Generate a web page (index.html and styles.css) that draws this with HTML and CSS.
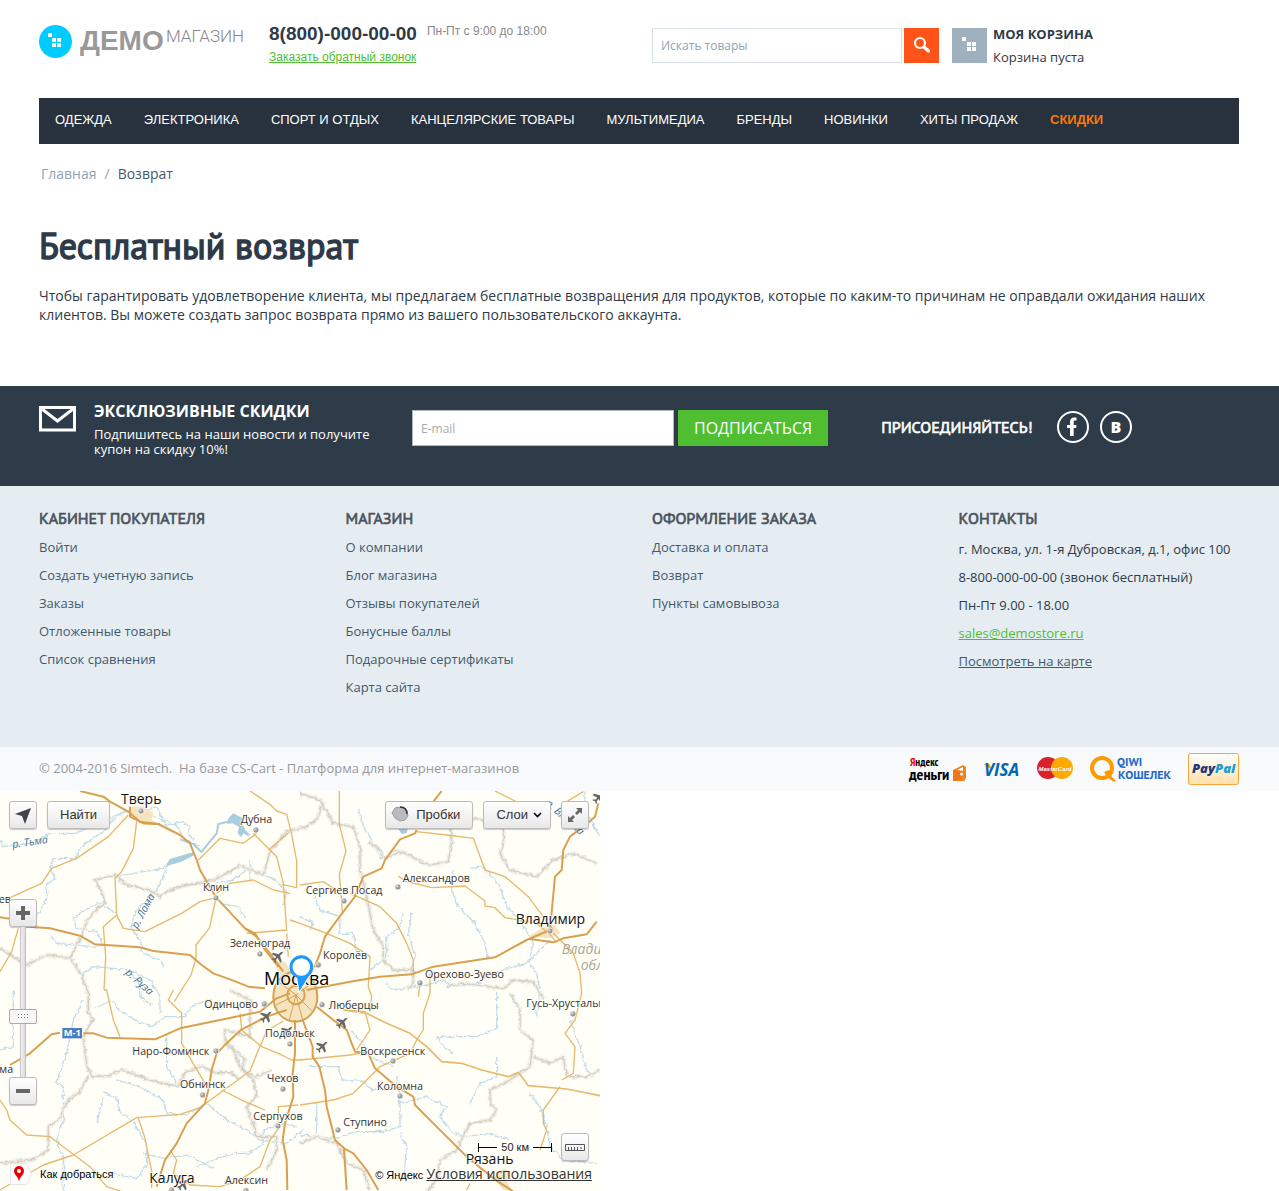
FILE: index.html
```html
<!DOCTYPE html>
<html lang="ru">

<head>
    <meta charset="UTF-8">
    <meta name="viewport" content="width=device-width, initial-scale=1.0">
    <title>Бесплатный возврат</title>
    <link rel="stylesheet" href="styles.css">
</head>

<body>
    <header class="container header">
        <a class="logo" href="#" aria-label="Демо магазин">
            <svg width="210" height="36" viewBox="0 0 210 36">
                <circle cx="16.500" cy="18.500" r="16.500" fill="#0cf"/>
                <path fill="#fff" d="M9 10h4v4H9zM13 15h4v4h-4zM18 15h4v4h-4zM13 20h4v4h-4zM18 20h4v4h-4z"/>
                <text class="logo-bold" x="41" y="27">ДЕМО</text>
                <text class="logo-light" x="127" y="19">МАГАЗИН</text>
            </svg>
        </a>
        <div class="phone">
            <div>
                <div class="phone-number">8(800)-000-00-00</div>
                <a class="callback" href="#">Заказать обратный звонок</a>
            </div>
            <div class="phone-hours">Пн-Пт с 9:00 до 18:00</div>
        </div>
        <div class="header-right">
            <form class="search">
                <input type="text" class="search-input" placeholder="Искать товары" aria-label="Искать товары">
                <button type="button" class="search-btn" aria-label="Найти">
                    <svg width="35" height="35" viewBox="0 0 35 35" fill="none" stroke="#fff">
                        <circle cx="16" cy="15" r="5" stroke-width="2.200"/>
                        <path d="M20 19l4.500 4" stroke-width="3.200" stroke-linecap="round"/>
                    </svg>
                </button>
            </form>
            <a class="cart" href="#">
                <svg width="35" height="35" viewBox="0 0 35 35">
                    <rect width="35" height="35" fill="#9fb1bf"/>
                    <path fill="#fff" d="M10 9h4v4h-4zM15 14h4v4h-4zM20 14h4v4h-4zM15 19h4v4h-4zM20 19h4v4h-4z"/>
                </svg>
                <span>
                    <b class="cart-title">МОЯ КОРЗИНА</b>
                    <span class="cart-text">Корзина пуста</span>
                </span>
            </a>
        </div>
    </header>

    <nav class="container">
        <ul class="menu">
            <li><a href="#">ОДЕЖДА</a></li>
            <li><a href="#">ЭЛЕКТРОНИКА</a></li>
            <li><a href="#">СПОРТ И ОТДЫХ</a></li>
            <li><a href="#">КАНЦЕЛЯРСКИЕ ТОВАРЫ</a></li>
            <li><a href="#">МУЛЬТИМЕДИА</a></li>
            <li><a href="#">БРЕНДЫ</a></li>
            <li><a href="#">НОВИНКИ</a></li>
            <li><a href="#">ХИТЫ ПРОДАЖ</a></li>
            <li><a class="sale" href="#">СКИДКИ</a></li>
        </ul>
    </nav>

    <main class="container content">
        <div class="breadcrumbs">
            <a href="#">Главная</a><span class="slash">/</span><span>Возврат</span>
        </div>
        <h1>Бесплатный возврат</h1>
        <p>Чтобы гарантировать удовлетворение клиента, мы предлагаем бесплатные возвращения для продуктов, которые по каким-то причинам не оправдали ожидания наших клиентов. Вы можете создать запрос возврата прямо из вашего пользовательского аккаунта.</p>
    </main>

    <section class="newsletter">
        <div class="container newsletter-row">
            <div class="promo">
                <svg class="promo-icon" width="37" height="26" viewBox="0 0 37 26" fill="none" stroke="#fff" stroke-width="3">
                    <path d="M1.500 1.500h34v22.500h-34z"/>
                    <path d="M3 3l15.500 12L34 3"/>
                </svg>
                <div>
                    <h2>ЭКСКЛЮЗИВНЫЕ СКИДКИ</h2>
                    <p>Подпишитесь на наши новости и получите купон на скидку 10%!</p>
                </div>
            </div>
            <form class="subscribe">
                <input type="email" class="subscribe-input" placeholder="E-mail" aria-label="E-mail">
                <button type="button" class="subscribe-btn">ПОДПИСАТЬСЯ</button>
            </form>
            <div class="social">
                <span class="social-title">ПРИСОЕДИНЯЙТЕСЬ!</span>
                <a href="#" aria-label="Facebook">
                    <svg width="32" height="32" viewBox="0 0 32 32">
                        <circle cx="16" cy="16" r="15" fill="none" stroke="#fff" stroke-width="2"/>
                        <path fill="#fff" d="M13 25v-8h-3v-3h3v-3c0-3 1.500-4.500 4-4.500h2.500v3H18c-1 0-1.300.5-1.300 1.500v3h2.800l-.4 3h-2.400v8z"/>
                    </svg>
                </a>
                <a href="#" aria-label="ВКонтакте">
                    <svg width="32" height="32" viewBox="0 0 32 32">
                        <circle cx="16" cy="16" r="15" fill="none" stroke="#fff" stroke-width="2"/>
                        <text class="vk" x="16" y="22">B</text>
                    </svg>
                </a>
            </div>
        </div>
    </section>

    <footer>
        <div class="footer-links">
            <div class="container footer-grid">
                <div>
                    <h3>КАБИНЕТ ПОКУПАТЕЛЯ</h3>
                    <ul>
                        <li><a href="#">Войти</a></li>
                        <li><a href="#">Создать учетную запись</a></li>
                        <li><a href="#">Заказы</a></li>
                        <li><a href="#">Отложенные товары</a></li>
                        <li><a href="#">Список сравнения</a></li>
                    </ul>
                </div>
                <div>
                    <h3>МАГАЗИН</h3>
                    <ul>
                        <li><a href="#">О компании</a></li>
                        <li><a href="#">Блог магазина</a></li>
                        <li><a href="#">Отзывы покупателей</a></li>
                        <li><a href="#">Бонусные баллы</a></li>
                        <li><a href="#">Подарочные сертификаты</a></li>
                        <li><a href="#">Карта сайта</a></li>
                    </ul>
                </div>
                <div>
                    <h3>ОФОРМЛЕНИЕ ЗАКАЗА</h3>
                    <ul>
                        <li><a href="#">Доставка и оплата</a></li>
                        <li><a href="#">Возврат</a></li>
                        <li><a href="#">Пункты самовывоза</a></li>
                    </ul>
                </div>
                <div>
                    <h3>КОНТАКТЫ</h3>
                    <ul class="contacts">
                        <li>г. Москва, ул. 1-я Дубровская, д.1, офис 100</li>
                        <li>8-800-000-00-00 (звонок бесплатный)</li>
                        <li>Пн-Пт 9.00 - 18.00</li>
                        <li><a class="mail" href="#">sales@demostore.ru</a></li>
                        <li><a class="on-map" href="#">Посмотреть на карте</a></li>
                    </ul>
                </div>
            </div>
        </div>
        <div class="copyright">
            <div class="container copyright-row">
                <p>© 2004-2016 Simtech. &nbsp;На базе CS-Cart - Платформа для интернет-магазинов</p>
                <svg class="payments" width="332" height="34" viewBox="0 0 332 34">
                    <defs>
                        <linearGradient id="pp" x1="0" y1="0" x2="0" y2="1">
                            <stop offset="0" stop-color="#fff"/>
                            <stop offset="1" stop-color="#ffe0a8"/>
                        </linearGradient>
                    </defs>
                    <text class="ya-small" x="3" y="14"><tspan fill="#e00">Я</tspan>ндекс</text>
                    <text class="ya-big" x="2" y="28">деньги</text>
                    <path fill="#f58220" d="M46 18l10-5 3 2v11l-2 3H46z"/>
                    <path fill="#d9640f" d="M46 18h9v9l-9 2z" opacity=".35"/>
                    <path fill="#fff" d="M50 18l6-3v4zM53 22a1.500 1.500 0 1 0 3 0 1.500 1.500 0 1 0-3 0z"/>
                    <path fill="#f90" d="M76 12h6l3 5-1 2c-1-3-4-6-8-7z"/>
                    <text class="visa" x="77" y="24">VISA</text>
                    <circle cx="141" cy="16" r="11" fill="#d9222a"/>
                    <circle cx="155" cy="16" r="11" fill="#fa0"/>
                    <text class="mc" x="148" y="19">MasterCard</text>
                    <circle cx="195" cy="16" r="10" fill="none" stroke="#f90" stroke-width="4"/>
                    <path d="M197 20l5-2 3 7 4 4-2 1-6-4z" fill="#f90"/>
                    <text class="qiwi" x="210" y="14">QIWI</text>
                    <text class="qiwi" x="211" y="27">КОШЕЛЕК</text>
                    <rect x="281.500" y="1.500" width="50" height="31" rx="2" fill="url(#pp)" stroke="#f9a63a"/>
                    <text class="paypal" x="285" y="21"><tspan fill="#1f3a79">Pay</tspan><tspan fill="#1a9bd7">Pal</tspan></text>
                </svg>
            </div>
        </div>
    </footer>

    <div class="map">
        <svg class="map-canvas" viewBox="0 3 1800 1200" preserveAspectRatio="xMinYMin slice">
            <defs>
                <g id="town">
                    <circle r="9" fill="#999" stroke="#fff" stroke-width="2"/>
                    <circle cx="-2" cy="-2" r="4" fill="#ccc"/>
                </g>
                <path id="plane" fill="#666" d="M15-16l-8 2-6 6-17-5-4 4 14 8-6 6-6-1-3 3 8 3 3 8 3-3-1-6 6-6 8 14 4-4-5-17 6-6z"/>
                <!-- makes rivers and borders wind -->
                <filter id="wind" filterUnits="userSpaceOnUse" x="0" y="0" width="1800" height="1210" color-interpolation-filters="sRGB">
                    <feTurbulence type="fractalNoise" baseFrequency="0.08" numOctaves="2" seed="4"/>
                    <feDisplacementMap in="SourceGraphic" scale="13" xChannelSelector="R" yChannelSelector="G"/>
                </filter>
                <g id="border-lines">
                    <path d="M0 475l40 25 40 25 60-30 70 10 30-60 25-60 50-50-10-30-20-35 60-15 35 30 70 15 30 20 10-10 50-20 100-20 50-25 30-20 70 30 20-70 50-60 60-15 30-20 20-55"/>
                    <path d="M215 508l30 50 20 50 0 60 15 20-30 50 10 90 15 30 50 0 40-20 50 20 60 20 60 10 20-40 50-20 40 20 50 0 20 20"/>
                    <path d="M265 860l-30 50-30 20-30 60-30 20 0 70-50 30-95 10M670 760l30 20 20 50 40 40 10 50 -30 30 20 50 10 40 60 0 0 40-30 60"/>
                    <path d="M690 600l60 30 0 110-75-20 0 30 60 60-10 30 40 20 50-20"/>
                    <path d="M900 10l60 20 40 70 60 10 20 60 0 70 20 80 20 100 30 50 0 40 30 30 60 0 0 40-20 20"/>
                    <path d="M1105 155l30 20 20 30 50-20 40 20 40 20 60-10 10-60 -5-50 80-20 60 20M1510 100l0 60-10 30 30 50 80 20 50-50 60-20 70 30"/>
                    <path d="M1340 590l50-10 120 15 30-25 60 5 30 50M1530 610l30 50 0 60 40 30 -10 80-60 40-60 30 0 40 20 20-20 30-60 10-40 80-50 30-10 60-50 60"/>
                    <path d="M1600 800l50 20 40-20 10 60 60 0 40-20M900 1060l50-20 60 20 30 60 50 20 20 60"/>
                </g>
            </defs>

            <!-- rivers -->
            <g class="rivers" filter="url(#wind)">
                <path d="M0 150l10 20 80-10 60-30 80 0 60-40 50-10 40 -20 40 10 60 15 20 20 50-10 20 15 -5 20 15 20"/>
                <path d="M385 60l-50 30-20 30-70 50-20 35-65 0-10 30 15 30-25 20 0 40-15 30-25 30 10 30"/>
                <path d="M440 60l30-10 20 40 40 15 20 40 50 25"/>
                <path d="M350 260l80-15 60-10 30-25 60-20M500 240l-30 60-60 60-20 50 30 40 10 40 50 20 10 20"/>
                <path d="M350 370l-50-30-30 10-50 35 10 30 60 10 20 40-30 5-110-10-15-20"/>
                <path d="M740 240l-40 30-50 10M740 240l80 25 40 40-10 40M750 210l0 60M660 340l55 10 20 35"/>
                <path d="M250 550l30-20 110 10 60 30 30 50 0 50M385 545l30 30 10 50 30 20M285 655l50-25 20 30 70 40 30 10 40-30 60 0 20-30 60-25"/>
                <path d="M250 630l-30 60-20 100-30 90 20 10 0 100-20 60 20 50 0 100 60 60M0 780l40-10 0-170"/>
                <path d="M310 905l40 20 10 40 40 30 40 70 0 60-30 40-80-15M430 1090l60 15 70-10 80 40M290 1000l20-80"/>
                <path d="M350 870l70 20 70 40 10 40 60 5 60-35 60 50 60 30 40 30 80 10 50-40M500 730l0 100 30 50"/>
                <path d="M590 1130l50-20 60-20 50 0 40-30 0-40 60-20 40 10"/>
                <path d="M1150 210l30-30 40 10M1160 580l20 20 100-15 50-15 30 20 70-10 50-30 60-20 40 -10 40-40 30-30"/>
                <path d="M1210 370l-10 40-40 30 0 60-50 40M1235 370l-10 60 20 70-15 50M1075 60l20 60 40 60 10 30"/>
                <path d="M1360 240l-5 60 20 50 50 50 30 60 10 50M1410 235l40-5 50 60 20 60 40 40 40 70-10 40M1590 520l20 30 10 50"/>
                <path d="M940 310l20 50 60 20 0 50 40 0 10 60M900 380l40 20-10 20M1725 80l30-30 0-50M1755 60l45 80"/>
                <path d="M925 830l90 0 10 40 60 0 30 30 80 -5M1190 860l10 90 0 60-50 15-80 0-60 20-60-5-50 -5M1200 940l80-20 60 30 -20 30 40 50 40 10 60-10 70 20"/>
                <path d="M1310 740l120 0 60-25 0-110M1310 740l20 30 30 20M1490 800l0 60-50 20-30 60M1200 1030l20 40-10 100M950 940l0 80-10 30"/>
                <path d="M1610 680l10-80M1710 690l30 80 20 70 20 20M1590 910l30 40 20 60 10 60 40 40 100 10M1050 720l40 40 20 40 70 30"/>
            </g>
            <g class="lakes">
                <path d="M500 222l10-15 40-12 35-10-5 12-40 20-38 10z"/>
                <path d="M685 85l15-15 15 8 18 8-6 14 10 22 14 12-8 4-12-8-8 12-10-12 4-20-20-10-15 2z"/>
                <path d="M1195 117h28l-3 12-15 3z"/>
            </g>
            <path class="canal" d="M540 148l40 14 24 24 46-56 5-28 40-10"/>

            <!-- region borders -->
            <g class="borders" filter="url(#wind)">
                <use href="#border-lines" class="border-glow"/>
                <use href="#border-lines" class="border-core"/>
            </g>

            <!-- city areas -->
            <g class="areas">
                <path d="M385 50h50l25 20-5 20 30 15-55 0-35-25z"/>
                <path d="M820 620l20-60 50-30 45 30 20 50-10 50-40 36-40-5-35-35z"/>
                <path d="M1585 440l40-25 40-10 15 25-30 15z"/>
                <path d="M1480 1165l30-30 20 10-10 30 20 30-30-5zM825 515l30 0 20 30-10 20-30-10z"/>
            </g>

            <!-- secondary roads -->
            <g class="roads">
                <path d="M385 75l-60 65-95 65-75 30-30 45-100 45M410 95l-10 80-35 70-20 20 5 110 20 40 65 10 60-30 50-25 55-35 40-10M312 600l5-100-7-90 40-35"/>
                <path d="M595 210l65-65 70 15 40-30M750 3l60 40 20 20 30 10 15 60 15 80 0 80-45 -10M760 130l70 70 20 80 10 140-120 10M865 130l-60 50M900 400l-30-10M860 430l5 70"/>
                <path d="M648 325l-20 90-40 50 0 40-15 50-50 80M650 310l40-30 70-10 60 30 50 10"/>
                <path d="M0 545l35-60 20-70M0 930l20 30 10 30 50 45 70 5 80 60 40 30 50 60 60 20 50-5M312 600l8 0 20 90 20 50M520 600l-15 30 40 40 0 90 40 70 30 50"/>
                <path d="M0 1200l130-75 90-30 190-112 130-10 60-20 150-110 20-50 30-70 50-30M415 985l20 60 20 100 0 50M665 900l70 35 60 25"/>
                <path d="M720 670l5 50 60 50 50 20 40 20 30 0M510 1080l20 30-10 40 50 35 90 5 60-20 60-40 30-80 30-40M835 1000l0-50 60-5"/>
                <path d="M1018 3l0 100 20 80-20 70 10 120M900 285l70-10 30 20M1050 310l90 40 50 50 30 60 20 50 0 40M900 400l80 30 70 30 60 40-5 90 10 30-5 40"/>
                <path d="M1195 258l20 15 80 20 100-5 60 45 0 15 30 5 30 30 90 15 40 30 25 30M1250 125l90 10 80 10 35 95 60 20 70 60 60 80 15 20M1660 430l60 60 20 60 5 60-20 80-30 40 30 40-5 80-35 20"/>
                <path d="M1260 580l-5 40M1485 3l60 30 60 50M1700 35l50-30M1070 780l40-60 -15-55-60-5M900 810l150-15 60-10M900 945l100-15 60-20 80-80 90-40 20-40 20-30 0-50 20-60 0-60"/>
                <path d="M1680 890l-50 70 0 40 10 20-20 60M1400 1200l10-20"/>
            </g>
            <g class="roads wide">
                <path d="M1030 660l70 10 60 30 70 30 50 40 45 45 60 5 60 20 80 20 30-13 30 40 115 10 100 20"/>
            </g>

            <!-- highways -->
            <g class="highways">
                <path d="M240 3l70 17 20 15 55 30 35 30 55 7 65 33 30 25 20 50 10 30 48 82 87 93 35 25 40 50 40 55"/>
                <path d="M735 415l30 15 30 50 40 50"/>
                <path d="M0 382l40 6 15 20 95 7 90 22 45 26 135 9 40 11 110 12 35 30 35 25 60 22 45 18 50 5"/>
                <path d="M1325 3l-25 32M1250 120l-5 10-45 18-45 62-10 25-55 25-25 60-45 58-45 62-15 50-20 50-40 50"/>
                <path d="M920 600l130-25 90-15 95-7 65-23 185-28 95-52 70-30 15-160 20-20 5-60 20-40 40-30 35-30 10-40M1590 447l70 10 30-12 70-12 30-38"/>
                <path d="M30 825l60-35 65-57 25-5M250 730h30l40 13 145 5 75-33 160-33 80-17 50-40 40-15"/>
                <path d="M470 1190l25-80 35-50 30-60 55-60 10-40 10-60 15-50 30-30 45-42 75-38 60-20"/>
                <path d="M885 690v100l-7 60 2 70-25 80-7 50 12 60 2 90M908 690l30 80v30l20 30 17 70 5 50 25 100 27 25 8 125M1032 1075l28 15 40 50 35 60"/>
                <path d="M950 650l50 40 40 30 15 40 10 25 40 5 20 45 65 55 50 30 5 25 55 55 100 100 80 65 60 40"/>
                <path d="M390 50l0 30 40 20 50 3"/>
                <ellipse cx="886" cy="620" rx="66" ry="75"/>
                <ellipse cx="888" cy="615" rx="26" ry="28"/>
                <path class="thin" d="M888 615l-60-45M888 615l60-45M888 615l-20 75M888 615l50 50M888 615l-60 30M888 615l20 75"/>
            </g>

            <rect x="187" y="714" width="59" height="31" fill="#4a7ebf"/>
            <text class="shield" x="217" y="739">М-1</text>

            <use href="#town" x="423" y="63"/>
            <use href="#town" x="768" y="120"/>
            <use href="#town" x="648" y="324"/>
            <use href="#town" x="780" y="492"/>
            <use href="#town" x="1194" y="291"/>
            <use href="#town" x="1032" y="333"/>
            <use href="#town" x="955" y="525"/>
            <use href="#town" x="1260" y="579"/>
            <use href="#town" x="1650" y="423"/>
            <use href="#town" x="793" y="642"/>
            <use href="#town" x="966" y="644"/>
            <use href="#town" x="870" y="762"/>
            <use href="#town" x="648" y="783"/>
            <use href="#town" x="608" y="915"/>
            <use href="#town" x="849" y="897"/>
            <use href="#town" x="834" y="1008"/>
            <use href="#town" x="1179" y="813"/>
            <use href="#town" x="1200" y="918"/>
            <use href="#town" x="1014" y="1020"/>
            <use href="#town" x="1719" y="672"/>
            <use href="#town" x="515" y="1200"/>
            <use href="#town" x="738" y="1202"/>
            <use href="#plane" x="835" y="501"/>
            <use href="#plane" x="800" y="681"/>
            <use href="#plane" x="863" y="726"/>
            <use href="#plane" x="1028" y="699"/>
            <use href="#plane" x="968" y="771"/>
            <use href="#plane" x="550" y="1184"/>
            <use href="#plane" x="1798" y="24"/>

            <g class="labels">
                <text class="city" x="363" y="42">Тверь</text>
                <text x="722" y="99">Дубна</text>
                <text x="609" y="303">Клин</text>
                <text x="689" y="471">Зеленоград</text>
                <text x="1208" y="277">Александров</text>
                <text x="917" y="311">Сергиев Посад</text>
                <text x="969" y="508">Королёв</text>
                <text x="1275" y="565">Орехово-Зуево</text>
                <text class="city" x="1547" y="402">Владимир</text>
                <text x="613" y="654">Одинцово</text>
                <text x="986" y="656">Люберцы</text>
                <text x="795" y="741">Подольск</text>
                <text x="397" y="795">Наро-Фоминск</text>
                <text x="540" y="894">Обнинск</text>
                <text x="801" y="876">Чехов</text>
                <text x="760" y="989">Серпухов</text>
                <text x="1081" y="795">Воскресенск</text>
                <text x="1131" y="899">Коломна</text>
                <text x="1030" y="1007">Ступино</text>
                <text x="1579" y="651">Гусь-Хрустальный</text>
                <text x="675" y="1182">Алексин</text>
                <text class="city" x="448" y="1180">Калуга</text>
                <text class="city" x="1397" y="1121">Рязань</text>
                <text class="capital" x="792" y="585">Москва</text>
                <text x="-4" y="339">ев</text>
                <text x="-2" y="849">ма</text>
            </g>
            <g class="region">
                <text x="1685" y="492">Владимирская</text>
                <text x="1742" y="539">область</text>
            </g>
            <g class="river-names">
                <text transform="translate(38 174) rotate(-8)">р. Тьма</text>
                <text transform="translate(412 418) rotate(-62)">р. Лама</text>
                <text transform="translate(374 550) rotate(42)">р. Руза</text>
                <text transform="translate(1635 42) rotate(42)">р. Вязьма</text>
            </g>

            <path d="M888 555l9 54 46-74-12-10z" fill="#1e98ff" stroke="#fff" stroke-width="4"/>
            <circle cx="904" cy="531" r="31" fill="#fff" stroke="#1e98ff" stroke-width="9"/>
        </svg>

        <button type="button" class="map-btn locate" aria-label="Моё местоположение">
            <svg width="26" height="26" viewBox="0 0 26 26"><path fill="#444" d="M21 6L5 12l7 2 3 8z"/></svg>
        </button>
        <button type="button" class="map-btn find">Найти</button>
        <div class="map-tools">
            <button type="button" class="map-btn traffic">
                <svg width="18" height="18" viewBox="0 0 18 18">
                    <path d="M1 8l3-5 6-1 5 3 2 6-3 4-5 1-5-3z" fill="#bbb" stroke="#999"/>
                    <path d="M9 2c5 0 7 3 7 7" fill="none" stroke="#333" stroke-width="1.500"/>
                </svg>
                Пробки
            </button>
            <button type="button" class="map-btn layers">
                Слои
                <svg width="9" height="8" viewBox="0 0 9 8"><path d="M1 3l3.500 3.500L8 3" fill="none" stroke="#000" stroke-width="1.600"/></svg>
            </button>
            <button type="button" class="map-btn square" aria-label="На весь экран">
                <svg width="26" height="26" viewBox="0 0 26 26" fill="#666">
                    <path d="M20 6v6l-2-2-3 3-2-2 3-3-2-2zM6 20v-6l2 2 3-3 2 2-3 3 2 2z"/>
                </svg>
            </button>
        </div>
        <div class="map-zoom">
            <button type="button" class="map-btn square" aria-label="Приблизить">
                <svg width="26" height="26" viewBox="0 0 26 26"><path fill="#666" d="M11 6h4v5h5v4h-5v5h-4v-5H6v-4h5z"/></svg>
            </button>
            <input type="range" class="zoom-range" min="0" max="100" value="39" aria-label="Масштаб">
            <button type="button" class="map-btn square" aria-label="Отдалить">
                <svg width="26" height="26" viewBox="0 0 26 26"><path fill="#666" d="M6 11h14v4H6z"/></svg>
            </button>
        </div>
        <a class="route" href="#">
            <svg width="22" height="22" viewBox="0 0 22 22">
                <path fill="#fff" stroke="#e6e6e6" d="M.5.5h16l5 10.500-5 10.500H.5z"/>
                <path fill="#e00" d="M9 3a5 5 0 0 1 5 5c0 4-4 5-5 11-0-5-5-7-5-11a5 5 0 0 1 5-5z"/>
                <circle cx="9" cy="8" r="2" fill="#fff"/>
            </svg>
            Как добраться
        </a>
        <div class="scale"><i></i>50 км<i></i></div>
        <button type="button" class="map-btn square ruler" aria-label="Измерить расстояние">
            <svg width="26" height="26" viewBox="0 0 26 26" fill="none" stroke="#555">
                <path d="M3.500 10.500h19v6h-19zM6.500 13v3M9.500 13v3M12.500 13v3M15.500 13v3M19 13v2"/>
            </svg>
        </button>
        <div class="terms">© Яндекс <a href="#">Условия использования</a></div>
    </div>
</body>

</html>
```

FILE: styles.css
```css
* {
    margin: 0;
    padding: 0;
    box-sizing: border-box;
}

body {
    font-family: "Open Sans", sans-serif;
    font-size: 14px;
    line-height: 19px;
    color: #2e3a47;
    background: #fff;
}

ul {
    list-style: none;
}

a {
    color: inherit;
    text-decoration: none;
}

svg {
    display: block;
    flex-shrink: 0;
}

.container {
    max-width: 1279px;
    margin: 0 auto;
    padding-left: 39px;
    padding-right: 40px;
}

/* header */
.header {
    display: grid;
    grid-template-columns: 3fr 5fr 8fr;
    height: 98px;
    padding-top: 23px;
}

.logo-bold {
    font: bold 28px "Liberation Sans", Arial, sans-serif;
    fill: #999;
}

.logo-light {
    font: 300 17px Roboto, sans-serif;
    fill: #888;
}

.phone {
    display: flex;
    gap: 10px;
    padding-left: 5px;
    font-family: "Liberation Sans", Arial, sans-serif;
}

.phone-number {
    font-size: 19px;
    font-weight: bold;
    line-height: 22px;
}

.callback {
    font-size: 12px;
    line-height: 24px;
    color: #4fbe31;
    text-decoration: underline;
}

.phone-hours {
    font-size: 12px;
    line-height: 16px;
    color: #888;
}

.header-right {
    display: flex;
    align-items: flex-start;
    gap: 13px;
    padding: 5px 0 0 13px;
}

.search {
    display: flex;
    gap: 2px;
}

.search-input {
    width: 250px;
    height: 35px;
    padding: 0 8px;
    border: 1px solid #dae1e8;
    font: 12px "Open Sans", sans-serif;
}

.search-input::placeholder {
    color: #8fa3b5;
}

.search-btn {
    width: 35px;
    height: 35px;
    border: none;
    background: #ff5319;
    cursor: pointer;
}

.cart {
    display: flex;
    gap: 6px;
    font-size: 13px;
}

.cart-title,
.cart-text {
    display: block;
    line-height: 23px;
}

.cart-title {
    margin-top: -5px;
}

/* menu */
.menu {
    display: flex;
    height: 46px;
    background: #27323e;
}

.menu a {
    display: block;
    padding: 0 16px;
    font: 13px/43px "Liberation Sans", Arial, sans-serif;
    color: #fff;
}

.menu .sale {
    font-weight: bold;
    color: #ff7700;
}

/* content */
.content {
    min-height: 242px;
    padding-top: 20px;
}

.breadcrumbs {
    padding-left: 2px;
    line-height: 20px;
    color: #8fa3b5;
}

.breadcrumbs .slash {
    margin: 0 8px;
}

.breadcrumbs span:last-child {
    color: #44596c;
}

/* PT Sans regular, thickened with a stroke */
h1,
h3,
.social-title {
    font-family: "PT Sans", "Open Sans", sans-serif;
    font-weight: 400;
    -webkit-text-stroke: 0.04em currentColor;
}

h1 {
    margin: 39px 0 17px;
    font-size: 36px;
    line-height: 46px;
}

/* newsletter */
.newsletter {
    min-height: 100px;
    background: #2e3c49;
    color: #fff;
}

.newsletter-row {
    display: flex;
    align-items: flex-start;
    padding-top: 15px;
}

.promo {
    display: flex;
    gap: 18px;
    width: 373px;
}

.promo-icon {
    margin-top: 5px;
}

.promo h2 {
    font-size: 16px;
    line-height: 20px;
    margin-bottom: 6px;
}

.promo p {
    font-size: 13px;
    line-height: 15px;
    max-width: 300px;
}

.subscribe {
    display: flex;
    gap: 4px;
    margin-top: 9px;
}

.subscribe-input {
    width: 262px;
    height: 36px;
    padding: 0 8px;
    border: 1px solid #a9b9c9;
    font: 12px "Open Sans", sans-serif;
}

.subscribe-input::placeholder {
    color: #aaa;
}

.subscribe-btn {
    height: 36px;
    padding: 0 16px;
    border: none;
    background: #4fbe31;
    color: #fff;
    font: 16px "Open Sans", sans-serif;
    cursor: pointer;
}

.social {
    display: flex;
    align-items: center;
    gap: 11px;
    margin: 10px 0 0 53px;
}

.social-title {
    margin-right: 13px;
    font-size: 16px;
}

.vk {
    font: 800 16px "Open Sans", sans-serif;
    fill: #fff;
    text-anchor: middle;
}

/* footer */
.footer-links {
    min-height: 261px;
    padding-top: 22px;
    background: #e5edf3;
}

.footer-grid {
    display: grid;
    grid-template-columns: repeat(4, 1fr);
    gap: 26px;
}

h3 {
    margin-bottom: 4px;
    font-size: 16px;
    line-height: 21px;
    color: #4a525b;
}

.footer-grid li {
    font-size: 13px;
    line-height: 28px;
    color: #44596c;
}

.footer-grid .contacts {
    margin-top: 6px;
}

.footer-grid .contacts li {
    color: #2e3a47;
}

.footer-grid .mail {
    color: #4fbe31;
    text-decoration: underline;
}

.footer-grid .on-map {
    color: #44596c;
    text-decoration: underline;
}

.copyright {
    background: #f8fafc;
}

.copyright-row {
    display: flex;
    justify-content: space-between;
    align-items: center;
    height: 44px;
    font-size: 13px;
    line-height: 18px;
    color: #999;
}

.copyright-row p {
    margin-bottom: 2px;
}

.ya-small {
    font: bold 11px "PT Sans Narrow", "Open Sans", sans-serif;
}

.ya-big {
    font: bold 16px "PT Sans Narrow", "Open Sans", sans-serif;
}

.visa {
    font: italic bold 17px "Open Sans", sans-serif;
    fill: #0066b2;
}

.mc {
    font: italic bold 6px "Liberation Sans", sans-serif;
    fill: #fff;
    text-anchor: middle;
}

.qiwi {
    font: bold 12px "PT Sans", "Open Sans", sans-serif;
    fill: #2268c8;
}

.paypal {
    font: italic 800 13px "Open Sans", sans-serif;
}

/* map */
.map {
    position: relative;
    width: 600px;
    max-width: 100%;
    height: 400px;
    overflow: hidden;
    background: #fffef7;
}

.map-canvas {
    width: 100%;
    height: 100%;
}

.map-canvas path,
.map-canvas ellipse {
    stroke-linejoin: round;
}

.rivers {
    fill: none;
    stroke: #c3dde8;
    stroke-width: 4;
}

.lakes {
    fill: #a9cde0;
}

.canal {
    fill: none;
    stroke: #a9cde0;
    stroke-width: 6;
}

.borders {
    fill: none;
}

.border-glow {
    stroke: #efede4;
    stroke-width: 13;
}

.border-core {
    stroke: #d3cfc4;
    stroke-width: 4;
}

.areas {
    fill: #f5e4bd;
}

.roads {
    fill: none;
    stroke: #e6b96e;
    stroke-width: 4;
}

.roads.wide {
    stroke-width: 5;
}

.highways {
    fill: none;
    stroke: #d9a050;
    stroke-width: 6;
}

.highways .thin {
    stroke-width: 3;
}

.labels text {
    font: 32px "Open Sans", sans-serif;
    fill: #333;
    stroke: #fffef7;
    stroke-width: 5px;
    paint-order: stroke;
}

.labels .city {
    font-size: 42px;
    fill: #111;
}

.labels .capital {
    font-size: 54px;
    fill: #000;
}

.shield {
    font: bold 28px "Open Sans", sans-serif;
    fill: #fff;
    text-anchor: middle;
}

.region text {
    font: italic 42px "Open Sans", sans-serif;
    fill: #aaa898;
}

.river-names text {
    font: italic 32px "Open Sans", sans-serif;
    fill: #3f7397;
}

.map-btn {
    display: flex;
    align-items: center;
    justify-content: center;
    height: 28px;
    border: 1px solid #bbb;
    border-radius: 3px;
    background: linear-gradient(#fff, #e8e8e8);
    box-shadow: 0 1px 1px rgba(0, 0, 0, 0.2);
    font: 13px "Liberation Sans", Arial, sans-serif;
    color: #333;
    cursor: pointer;
}

.locate,
.square {
    width: 28px;
}

.locate {
    position: absolute;
    top: 10px;
    left: 9px;
}

.find {
    position: absolute;
    top: 10px;
    left: 47px;
    padding: 0 12px 2px;
}

.map-tools {
    position: absolute;
    top: 10px;
    right: 11px;
    display: flex;
    gap: 10px;
}

.traffic {
    gap: 7px;
    padding: 0 12px 2px 5px;
}

.layers {
    gap: 5px;
    padding: 0 8px 2px 12px;
}

.map-zoom {
    position: absolute;
    top: 108px;
    left: 9px;
    width: 28px;
}

.zoom-range {
    display: block;
    width: 28px;
    height: 150px;
    appearance: none;
    writing-mode: vertical-lr;
    direction: rtl;
    background: linear-gradient(90deg, #aaa, #eee 20%, #ddd 80%, #aaa) center / 6px 100% no-repeat;
}

.zoom-range::-webkit-slider-thumb {
    appearance: none;
    width: 28px;
    height: 15px;
    border: 1px solid #aaa;
    border-radius: 2px;
    background:
        radial-gradient(circle, #777 1px, transparent 1px) 7px 3px / 3px 3px,
        #f6f6f6;
    background-clip: content-box, border-box;
    padding: 4px 7px;
}

.route {
    position: absolute;
    left: 10px;
    bottom: 6px;
    display: flex;
    align-items: center;
    gap: 8px;
    font: 11px "Liberation Sans", Arial, sans-serif;
    color: #000;
}

.scale {
    position: absolute;
    right: 48px;
    bottom: 38px;
    display: flex;
    align-items: center;
    gap: 4px;
    font: 11px "Liberation Sans", Arial, sans-serif;
    color: #222;
}

.scale i {
    width: 19px;
    height: 9px;
    border-left: 1px solid #000;
    background: linear-gradient(#000, #000) center / 100% 1px no-repeat;
}

.scale i:last-child {
    border-left: none;
    border-right: 1px solid #000;
}

.ruler {
    position: absolute;
    right: 11px;
    bottom: 30px;
}

.terms {
    position: absolute;
    right: 8px;
    bottom: 6px;
    font: 11px/19px "Liberation Sans", Arial, sans-serif;
    color: #000;
}

.terms a {
    font: 14px "Open Sans", sans-serif;
    color: #333;
    text-decoration: underline;
}
```
